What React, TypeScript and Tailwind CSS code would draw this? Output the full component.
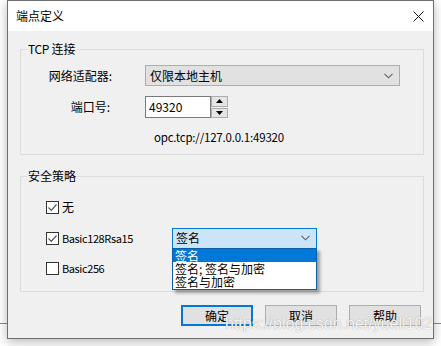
import React from 'react';

function Check() {
  return (
    <svg width="11" height="11" viewBox="0 0 11 11" className="block">
      <path d="M1.5 5.5 L4.3 8.3 L9.5 2.5" fill="none" stroke="#555" strokeWidth="1.2" />
    </svg>
  );
}

function CheckBox({ checked }: { checked: boolean }) {
  return (
    <div className="w-[13px] h-[13px] border border-[#333] bg-white flex items-center justify-center shrink-0">
      {checked && <Check />}
    </div>
  );
}

function Chevron() {
  return (
    <svg width="9" height="6" viewBox="0 0 9 6" className="block">
      <path d="M0.5 0.8 L4.5 4.8 L8.5 0.8" fill="none" stroke="#606060" strokeWidth="1.1" />
    </svg>
  );
}

export default function App() {
  return (
    <div className="relative w-[441px] h-[346px] overflow-hidden bg-white font-['Noto_Sans_CJK_SC',sans-serif] text-[12px] text-black">
      {/* desktop line behind the dialog */}
      <div className="absolute top-[323px] left-0 right-0 h-px bg-[#7d8894]" />

      <div className="relative ml-[7px] w-[427px] h-[339px] border border-[#6f6f6f] bg-[#f0f0f0] shadow-[0_3px_10px_rgba(0,0,0,0.28)] flex flex-col">
        {/* title bar */}
        <div className="h-[30px] bg-white flex items-center pl-[8px] pr-[9px] shrink-0">
          <span className="leading-none">端点定义</span>
          <div className="ml-auto">
            <svg width="11" height="11" viewBox="0 0 11 11" className="block">
              <path d="M0.5 0.5 L10.5 10.5 M10.5 0.5 L0.5 10.5" stroke="#111" strokeWidth="1" />
            </svg>
          </div>
        </div>

        <div className="flex-1 pl-[12px] pr-[9px] pt-[18px]">
          {/* TCP group */}
          <div className="relative h-[106px] border border-[#dcdcdc]">
            <span className="absolute -top-[9px] left-[6px] px-[1px] bg-[#f0f0f0] leading-[16px]">
              <span className="tracking-[-0.4px]">TCP</span> 连接
            </span>
            <div className="pt-[15px]">
              <div className="flex items-center h-[21px]">
                <div className="w-[91px] text-right">网络适配器:</div>
                <div className="ml-[33px] w-[255px] h-[21px] border border-[#adadad] bg-[#e1e1e1] flex items-center pl-[4px] pr-[6px]">
                  <span>仅限本地主机</span>
                  <div className="ml-auto"><Chevron /></div>
                </div>
              </div>
              <div className="flex items-center h-[22px] mt-[10px]">
                <div className="w-[89px] text-right">端口号:</div>
                <div className="ml-[35px] w-[66px] h-[22px] border border-[#7a7a7a] bg-white flex items-center pl-[3px]">
                  49320
                </div>
                <div className="w-[17px] h-[22px] flex flex-col gap-[1px]">
                  <div className="flex-1 border border-[#adadad] bg-[#e5e5e5] flex items-center justify-center">
                    <svg width="7" height="4" viewBox="0 0 7 4"><path d="M0 4 L3.5 0 L7 4 Z" fill="#000" /></svg>
                  </div>
                  <div className="flex-1 border border-[#adadad] bg-[#e5e5e5] flex items-center justify-center">
                    <svg width="7" height="4" viewBox="0 0 7 4"><path d="M0 0 L7 0 L3.5 4 Z" fill="#000" /></svg>
                  </div>
                </div>
              </div>
              <div className="mt-[11px] ml-[133px] leading-[16px] text-[11.5px] tracking-[-0.2px]">opc.tcp://127.0.0.1:49320</div>
            </div>
          </div>

          {/* security group */}
          <div className="relative mt-[21px] h-[116px] border border-[#dcdcdc]">
            <span className="absolute -top-[9px] left-[6px] px-[1px] bg-[#f0f0f0] leading-[16px]">安全策略</span>
            <div className="pt-[20px] pl-[25px]">
              <div className="flex items-center h-[20px]">
                <CheckBox checked />
                <span className="ml-[3px]">无</span>
              </div>
              <div className="flex items-center h-[20px] mt-[11px]">
                <div className="w-[126px] flex items-center">
                  <CheckBox checked />
                  <span className="ml-[3px] text-[11px] tracking-[-0.4px]">Basic128Rsa15</span>
                </div>
                <div className="relative w-[145px] h-[21px] border border-[#0078d7] bg-[#cce4f7] flex items-center pl-[3px] pr-[6px]">
                  <span>签名</span>
                  <div className="ml-auto"><Chevron /></div>
                  <div className="absolute left-[-1px] top-[19px] w-[145px] h-[42px] border border-[#0b5fa8] bg-white shadow-[3px_3px_3px_rgba(0,0,0,0.35)] flex flex-col leading-[13px]">
                    <div className="bg-[#0078d7] text-white pl-[2px] h-[13px]">签名</div>
                    <div className="pl-[2px] h-[13px]">签名; 签名与加密</div>
                    <div className="pl-[2px] h-[13px]">签名与加密</div>
                  </div>
                </div>
              </div>
              <div className="flex items-center h-[20px] mt-[10px]">
                <CheckBox checked={false} />
                <span className="ml-[3px] text-[11px] tracking-[-0.4px]">Basic256</span>
              </div>
            </div>
          </div>

          {/* buttons */}
          <div className="mt-[13px] pr-[3px] flex justify-end gap-[12px]">
            <button className="w-[72px] h-[21px] border-2 border-[#0078d7] bg-[#e1e1e1] flex items-center justify-center">确定</button>
            <button className="w-[72px] h-[21px] border border-[#adadad] bg-[#e1e1e1] flex items-center justify-center">取消</button>
            <button className="w-[72px] h-[21px] border border-[#adadad] bg-[#e1e1e1] flex items-center justify-center">帮助</button>
          </div>
        </div>
      </div>

      {/* watermark */}
      <div className="absolute left-[225px] top-[314px] text-[16px] font-['Liberation_Sans',sans-serif] text-white/90 [text-shadow:0_0_1px_#8a8a8a] leading-[20px]">
        https://blog.csdn.net/yuell102
      </div>
    </div>
  );
}
